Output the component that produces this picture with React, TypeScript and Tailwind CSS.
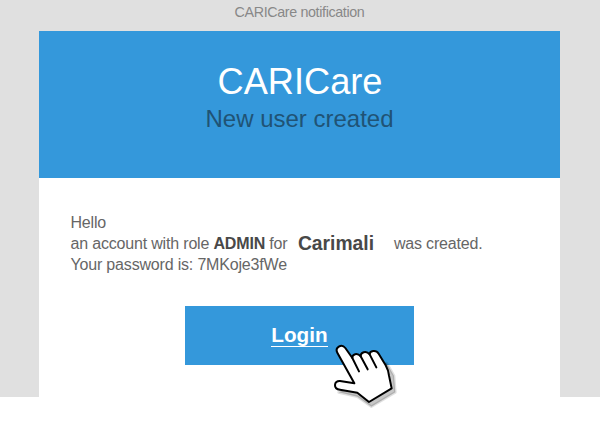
function HandCursor() {
  return (
    <svg
      className="absolute top-[335px] left-[320px] h-[80px] w-[90px]"
      viewBox="0 0 270 240"
      fill="none"
      strokeLinecap="round"
      strokeLinejoin="round"
    >
      <path
        d="M56 172L112 185L154 215L226 172L222 122L200 84L140 100L104 150Z"
        fill="#000"
        fillOpacity="0.22"
        stroke="#000"
        strokeOpacity="0.12"
        strokeWidth="8"
      />
      <path
        d="M103 145L52 53C44 39 64 24 76 39L97 69C96 57 112 52 122 64C121 52 138 45 149 58C149 47 168 43 176 56L197 91C202 100 206 110 207 122L215 160L147 201L112 173L60 164C39 162 41 137 60 138Z"
        fill="#fff"
        stroke="#000"
        strokeWidth="6"
      />
      <path d="M97 69L117 109M122 64L143 103M149 58L169 97" stroke="#000" strokeWidth="6" />
    </svg>
  );
}

export default function App() {
  return (
    <div className="relative h-[424px] w-[600px] overflow-hidden bg-white font-['Liberation_Sans',Arial,sans-serif]">
      <div className="flex h-[397px] flex-col items-center bg-[#e0e0e0] pr-px">
        <p className="h-[31px] pt-[2px] text-[14.3px] leading-[20px] tracking-[-0.36px] whitespace-nowrap text-[#888888]">
          CARICare notification
        </p>
        <main className="flex w-[521px] grow flex-col bg-white">
          <header className="flex h-[147px] flex-col items-center bg-[#3498db] pt-[30px]">
            <h1 className="pl-px text-[36.2px] leading-[42px] text-white">CARICare</h1>
            <h2 className="text-[24px] leading-[32px] text-[#205375]">New user created</h2>
          </header>
          <div className="pt-[34px] pr-[31px] pl-[31.5px] text-[16px] leading-[21px] tracking-[-0.18px] whitespace-nowrap text-[#666666]">
            <p>Hello</p>
            <p className="flex h-[21px] items-baseline">
              <span>
                an account with role <strong className="text-[#484848]">ADMIN</strong> for
              </span>
              <strong className="ml-[10.5px] w-[96px] translate-y-px text-[19.3px] leading-[18px] tracking-normal text-[#484848]">
                Carimali
              </strong>
              <span>was created.</span>
            </p>
            <p>Your password is: 7MKoje3fWe</p>
          </div>
          <a
            href="#login"
            className="mt-[31px] flex h-[59px] w-[229px] items-center justify-center self-center bg-[#3498db] text-[20.7px] font-bold text-white"
          >
            <span className="border-b border-white leading-[22px]">Login</span>
          </a>
        </main>
      </div>
      <HandCursor />
    </div>
  );
}
